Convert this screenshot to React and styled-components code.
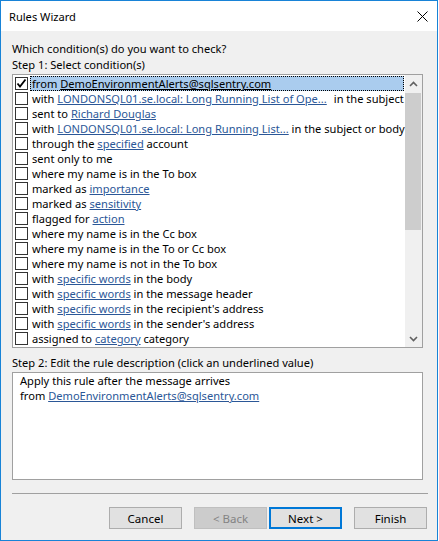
import React from "react";
import styled, { createGlobalStyle } from "styled-components";

const GlobalStyle = createGlobalStyle`
  html, body {
    margin: 0;
    padding: 0;
    background: #ffffff;
  }
  * {
    box-sizing: border-box;
  }
`;

const WINDOW = styled.div`
  width: 438px;
  height: 541px;
  border: 1px solid #1883d7;
  display: flex;
  flex-direction: column;
  font-family: "Segoe UI", "Noto Sans", sans-serif;
  font-size: 11.1px;
  color: #000;
`;

const TITLEBAR = styled.div`
  height: 30px;
  background: #ffffff;
  display: flex;
  align-items: center;
  justify-content: space-between;
  padding: 0 9px 0 8px;
  flex-shrink: 0;
`;

const CLIENT = styled.div`
  flex: 1;
  background: #f0f0f0;
  padding: 10px 9px 0 11px;
  display: flex;
  flex-direction: column;
`;

const LABEL = styled.div`
  line-height: 16px;
  height: 16px;
  white-space: nowrap;
  margin-top: ${(p) => p.$top || 0}px;
`;

const LISTBOX = styled.div`
  width: 411px;
  height: 274px;
  margin-top: 1px;
  border: 1px solid #a0a0a0;
  background: #ffffff;
  display: flex;
`;

const ROWS = styled.div`
  flex: 1;
  padding-top: 1px;
  overflow: hidden;
`;

const ROW = styled.div`
  height: 15px;
  display: flex;
  align-items: center;
  padding-left: 2px;
`;

const CHECK = styled.span`
  width: 13px;
  height: 13px;
  border: 1px solid #333333;
  background: #ffffff;
  flex-shrink: 0;
  display: flex;
  align-items: center;
  justify-content: center;
`;

const TEXT = styled.span`
  flex: 1;
  height: 15px;
  line-height: 13px;
  margin: 0 1px 0 2px;
  padding: 0 1px;
  white-space: nowrap;
  background: ${(p) => (p.$selected ? "#aaccee" : "transparent")};
  border: 1px ${(p) => (p.$selected ? "dotted #000" : "solid transparent")};
`;

const LINK = styled.span`
  color: ${(p) => (p.$plain ? "#000" : "#2b5797")};
  text-decoration: underline;
  text-underline-offset: 1px;
  text-decoration-thickness: 1px;
`;

const GAP = styled.span`
  margin-left: ${(p) => p.$w}px;
`;

const SCROLLBAR = styled.div`
  width: 17px;
  flex-shrink: 0;
  background: #f0f0f0;
  display: flex;
  flex-direction: column;
`;

const ARROW = styled.div`
  height: 17px;
  display: flex;
  align-items: center;
  justify-content: center;
`;

const TRACK = styled.div`
  flex: 1;
  display: flex;
  flex-direction: column;
`;

const THUMB = styled.div`
  height: 137px;
  margin: 1px 1px 0 0;
  background: #cdcdcd;
`;

const DESCBOX = styled.div`
  width: 411px;
  height: 108px;
  margin-top: 1px;
  border: 1px solid #a0a0a0;
  background: #ffffff;
  padding: 0 7px;
  line-height: 15px;
`;

const SEPARATOR = styled.div`
  height: 1px;
  margin-top: 13px;
  background: #a0a0a0;
`;

const BUTTONS = styled.div`
  display: flex;
  justify-content: flex-end;
  margin-top: 13px;
  padding-right: 1px;
`;

const BUTTON = styled.button`
  width: 73px;
  height: 22px;
  margin-left: ${(p) => p.$gap}px;
  font-family: inherit;
  font-size: 11.5px;
  padding: 0;
  background: ${(p) => (p.disabled ? "#cccccc" : "#e1e1e1")};
  color: ${(p) => (p.disabled ? "#838383" : "#000")};
  border: ${(p) => (p.$default ? "2px solid #0078d7" : p.disabled ? "1px solid #bfbfbf" : "1px solid #adadad")};
`;

const rows = [
  { checked: true, parts: ["from ", { link: "DemoEnvironmentAlerts@sqlsentry.com", plain: true }] },
  { parts: ["with ", { link: "LONDONSQL01.se.local: Long Running List of Ope..." }, { gap: 7 }, "in the subject"] },
  { parts: ["sent to ", { link: "Richard Douglas" }] },
  { parts: ["with ", { link: "LONDONSQL01.se.local: Long Running List..." }, " in the subject or body"] },
  { parts: ["through the ", { link: "specified" }, " account"] },
  { parts: ["sent only to me"] },
  { parts: ["where my name is in the To box"] },
  { parts: ["marked as ", { link: "importance" }] },
  { parts: ["marked as ", { link: "sensitivity" }] },
  { parts: ["flagged for ", { link: "action" }] },
  { parts: ["where my name is in the Cc box"] },
  { parts: ["where my name is in the To or Cc box"] },
  { parts: ["where my name is not in the To box"] },
  { parts: ["with ", { link: "specific words" }, " in the body"] },
  { parts: ["with ", { link: "specific words" }, " in the message header"] },
  { parts: ["with ", { link: "specific words" }, " in the recipient's address"] },
  { parts: ["with ", { link: "specific words" }, " in the sender's address"] },
  { parts: ["assigned to ", { link: "category" }, " category"] },
];

const renderPart = (part, i) => {
  if (typeof part === "string") return <React.Fragment key={i}>{part}</React.Fragment>;
  if (part.gap) return <GAP key={i} $w={part.gap} />;
  return (
    <LINK key={i} $plain={part.plain}>
      {part.link}
    </LINK>
  );
};

const Chevron = ({ up }) => (
  <svg width="9" height="6" viewBox="0 0 9 6">
    <polyline
      points={up ? "1,5 4.5,1.5 8,5" : "1,1 4.5,4.5 8,1"}
      fill="none"
      stroke="#606060"
      strokeWidth="1.6"
    />
  </svg>
);

const App = () => {
  return (
    <>
      <GlobalStyle />
      <WINDOW>
        <TITLEBAR>
          <span>Rules Wizard</span>
          <svg width="11" height="11" viewBox="0 0 11 11">
            <path d="M0.5 0.5 L10.5 10.5 M10.5 0.5 L0.5 10.5" stroke="#000" strokeWidth="1" />
          </svg>
        </TITLEBAR>
        <CLIENT>
          <LABEL>Which condition(s) do you want to check?</LABEL>
          <LABEL>Step 1: Select condition(s)</LABEL>
          <LISTBOX>
            <ROWS>
              {rows.map((r, i) => (
                <ROW key={i}>
                  <CHECK>
                    {r.checked && (
                      <svg width="11" height="11" viewBox="0 0 11 11">
                        <polyline points="1.5,5.5 4,8.5 9.5,1.5" fill="none" stroke="#000" strokeWidth="1.8" />
                      </svg>
                    )}
                  </CHECK>
                  <TEXT $selected={r.checked}>{r.parts.map(renderPart)}</TEXT>
                </ROW>
              ))}
            </ROWS>
            <SCROLLBAR>
              <ARROW>
                <Chevron up />
              </ARROW>
              <TRACK>
                <THUMB />
              </TRACK>
              <ARROW>
                <Chevron />
              </ARROW>
            </SCROLLBAR>
          </LISTBOX>
          <LABEL $top={7}>Step 2: Edit the rule description (click an underlined value)</LABEL>
          <DESCBOX>
            <div>Apply this rule after the message arrives</div>
            <div>
              from <LINK>DemoEnvironmentAlerts@sqlsentry.com</LINK>
            </div>
          </DESCBOX>
          <SEPARATOR />
          <BUTTONS>
            <BUTTON $gap={0}>Cancel</BUTTON>
            <BUTTON $gap={12} disabled>
              &lt; Back
            </BUTTON>
            <BUTTON $gap={2} $default>
              Next &gt;
            </BUTTON>
            <BUTTON $gap={12}>Finish</BUTTON>
          </BUTTONS>
        </CLIENT>
      </WINDOW>
    </>
  );
};

export default App;
